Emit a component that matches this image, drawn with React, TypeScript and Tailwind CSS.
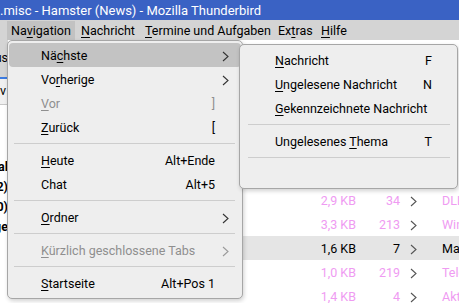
import type { ReactNode } from 'react';

function Ak({ text, at }: { text: string; at: number }) {
  if (at < 0) return <>{text}</>;
  return (
    <>
      {text.slice(0, at)}
      <u className="underline-offset-[2px]">{text[at]}</u>
      {text.slice(at + 1)}
    </>
  );
}

function Chevron({ color = '#333333' }: { color?: string }) {
  return (
    <svg width="7" height="11" viewBox="0 0 7 11" fill="none">
      <polyline points="1,1 6,5.5 1,10" stroke={color} strokeWidth="1.1" />
    </svg>
  );
}

interface ItemProps {
  label: ReactNode;
  shortcut?: string;
  arrow?: boolean;
  disabled?: boolean;
  active?: boolean;
}

function MainItem({ label, shortcut, arrow, disabled, active }: ItemProps) {
  return (
    <div
      className={`flex h-[24px] items-center rounded-[4px] pl-[32px] pt-[2px] ${
        active ? 'bg-[#c3c3c3]' : ''
      } ${disabled ? 'text-[#8f8f8f]' : 'text-black'}`}
    >
      <span className="flex-1 whitespace-nowrap">{label}</span>
      <span className="whitespace-nowrap text-right">{shortcut}</span>
      <span className="flex w-[26px] items-center pl-[7px]">
        {arrow && <Chevron color={disabled ? '#9a9a9a' : '#333333'} />}
      </span>
    </div>
  );
}

function SubItem({ label, shortcut }: ItemProps) {
  return (
    <div className="flex h-[24px] items-center pl-[34px] pr-[24px] pt-[2px] text-black">
      <span className="flex-1 whitespace-nowrap">{label}</span>
      <span className="whitespace-nowrap">{shortcut}</span>
    </div>
  );
}

function Sep({ inset }: { inset: string }) {
  return (
    <div className={`flex h-[9px] items-center ${inset}`}>
      <div className="h-px w-full bg-[#cdcdcd]" />
    </div>
  );
}

const rows = [
  { size: '2,9 KB', count: '34', subject: 'DLL fehlt', read: true },
  { size: '3,3 KB', count: '213', subject: 'Windows 11', read: true },
  { size: '1,6 KB', count: '7', subject: 'Mail', read: false },
  { size: '1,0 KB', count: '219', subject: 'Telefon', read: true },
  { size: '1,4 KB', count: '4', subject: 'Aktuell', read: true },
];

const folderRows = ['Lokal', '(12)', '(30)', 'Ablage'];

export default function App() {
  return (
    <div className="relative h-[303px] w-[459px] overflow-hidden bg-white font-['Roboto',Arial,sans-serif] text-[12.5px] leading-none">
      {/* title bar */}
      <div className="flex h-[20px] items-center bg-[#3a62c4] whitespace-nowrap text-[13px] text-white">
        .misc - Hamster (News) - Mozilla Thunderbird
      </div>

      {/* menu bar */}
      <div className="flex h-[20px] items-center bg-[#d4d4d4] pl-[7px] pt-[1px] text-black">
        <div className="flex h-[19px] w-[68px] items-center bg-[#c2c2c2] pl-[4px] pt-[1px]">
          <Ak text="Navigation" at={2} />
        </div>
        <div className="w-[70px] pl-[6px] pt-[1px]">
          <Ak text="Nachricht" at={0} />
        </div>
        <div className="w-[133px] pt-[1px]">
          <Ak text="Termine und Aufgaben" at={0} />
        </div>
        <div className="w-[43px] pt-[1px]">
          <Ak text="Extras" at={2} />
        </div>
        <div className="pt-[1px]">
          <Ak text="Hilfe" at={0} />
        </div>
      </div>

      {/* content */}
      <div className="flex h-[263px]">
        <div className="flex w-[8px] shrink-0 flex-col overflow-hidden">
          <div className="flex h-[37px] shrink-0 items-center justify-end bg-[#d4d4d4] whitespace-nowrap">
            Status
          </div>
          <div className="h-[2px] shrink-0 bg-[#3d7be0]" />
          <div className="flex h-[26px] shrink-0 items-center border-b border-[#c8c8c8] bg-[#f0f0f0] whitespace-nowrap">
            v
          </div>
          <div className="flex flex-col pt-[52px] font-bold">
            {folderRows.map((f) => (
              <div key={f} className="flex h-[20px] items-center justify-end whitespace-nowrap">
                {f}
              </div>
            ))}
          </div>
        </div>
        <div className="flex flex-1 flex-col pt-[148px]">
          {rows.map((r, i) => (
            <div
              key={i}
              className={`flex h-[24px] shrink-0 items-center whitespace-nowrap pt-[2px] ${
                r.read ? 'text-[#ef9bf2]' : 'bg-[#e5e5e5] text-black'
              }`}
            >
              <span className="w-[348px] shrink-0 text-right">{r.size}</span>
              <span className="w-[44px] shrink-0 text-right">{r.count}</span>
              <span className="ml-[10px] flex shrink-0 items-center">
                <Chevron color="#555555" />
              </span>
              <span className="ml-[25px] shrink-0">{r.subject}</span>
            </div>
          ))}
        </div>
      </div>

      {/* Navigation menu */}
      <div className="absolute left-[7px] top-[40px] h-[259px] w-[236px] rounded-[5px] border border-[#a6a6a6] bg-[#eeeeee] px-[1px] pt-[2px] shadow-[1px_2px_4px_rgba(0,0,0,0.18)]">
        <MainItem label={<Ak text="Nächste" at={2} />} arrow active />
        <MainItem label={<Ak text="Vorherige" at={2} />} arrow />
        <MainItem label={<Ak text="Vor" at={0} />} shortcut="]" disabled />
        <MainItem label={<Ak text="Zurück" at={0} />} shortcut="[" />
        <Sep inset="ml-[5px] mr-[6px]" />
        <MainItem label={<Ak text="Heute" at={0} />} shortcut="Alt+Ende" />
        <MainItem label="Chat" shortcut="Alt+5" />
        <Sep inset="ml-[5px] mr-[6px]" />
        <MainItem label={<Ak text="Ordner" at={0} />} arrow />
        <Sep inset="ml-[5px] mr-[6px]" />
        <MainItem label={<Ak text="Kürzlich geschlossene Tabs" at={0} />} arrow disabled />
        <Sep inset="ml-[5px] mr-[6px]" />
        <MainItem label={<Ak text="Startseite" at={0} />} shortcut="Alt+Pos 1" />
      </div>

      {/* Nächste submenu */}
      <div className="absolute left-[239px] top-[44px] h-[145px] w-[219px] rounded-[5px] border border-[#a6a6a6] bg-[#eeeeee] px-[1px] pt-[3px] shadow-[1px_2px_4px_rgba(0,0,0,0.18)]">
        <SubItem label={<Ak text="Nachricht" at={0} />} shortcut="F" />
        <SubItem label={<Ak text="Ungelesene Nachricht" at={0} />} shortcut="N" />
        <SubItem label={<Ak text="Gekennzeichnete Nachricht" at={0} />} />
        <Sep inset="ml-[7px] mr-[6px]" />
        <SubItem label={<Ak text="Ungelesenes Thema" at={12} />} shortcut="T" />
        <Sep inset="ml-[7px] mr-[6px]" />
      </div>
    </div>
  );
}
